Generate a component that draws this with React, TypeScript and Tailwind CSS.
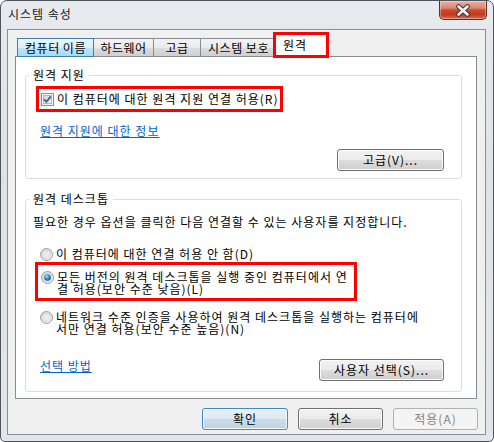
import type { ReactNode } from "react";

type Kind = "normal" | "default" | "disabled";

const buttonStyles: Record<Kind, string> = {
  normal:
    "border-[#707070] bg-[linear-gradient(#f2f2f2_0%,#ebebeb_50%,#dddddd_50%,#cfcfcf_100%)] shadow-[inset_0_0_0_1px_#fbfbfb] text-black",
  default:
    "border-[#3c8ac8] bg-[linear-gradient(#e9f1f6_0%,#dde9f1_50%,#cbdde9_50%,#bdd3e2_100%)] shadow-[inset_0_0_0_1px_#f6fbfe] text-black",
  disabled: "border-[#adb2b5] bg-[#f4f4f4] text-[#838383]",
};

function WinButton({ label, kind = "normal", className = "" }: { label: string; kind?: Kind; className?: string }) {
  return (
    <div
      className={`flex h-[22px] items-center justify-center rounded-[3px] border text-[12px] leading-none ${buttonStyles[kind]} ${className}`}
    >
      {label}
    </div>
  );
}

function CheckBox() {
  return (
    <svg width="13" height="13" viewBox="0 0 13 13" className="shrink-0">
      <defs>
        <linearGradient id="cbIn" x1="0" y1="0" x2="1" y2="1">
          <stop offset="0" stopColor="#cfd3d8" />
          <stop offset="1" stopColor="#f7f7f7" />
        </linearGradient>
      </defs>
      <rect x="0.5" y="0.5" width="12" height="12" fill="#f6f6f6" stroke="#8e8f8f" />
      <rect x="2.5" y="2.5" width="8" height="8" fill="url(#cbIn)" stroke="#b4b8bd" />
      <path d="M3.2 6.3 L5.4 8.9 L9.8 3.4" fill="none" stroke="#4a5f97" strokeWidth="1.8" />
    </svg>
  );
}

function Radio({ on = false }: { on?: boolean }) {
  return (
    <svg width="13" height="13" viewBox="0 0 13 13" className="shrink-0">
      <defs>
        <linearGradient id="rdOut" x1="0" y1="0" x2="1" y2="1">
          <stop offset="0" stopColor="#d3d5d8" />
          <stop offset="1" stopColor="#f8f8f8" />
        </linearGradient>
        <radialGradient id="rdDot" cx="0.4" cy="0.35" r="0.7">
          <stop offset="0" stopColor="#b8e4fa" />
          <stop offset="0.45" stopColor="#2b9ad6" />
          <stop offset="1" stopColor="#0d4f80" />
        </radialGradient>
      </defs>
      <circle cx="6.5" cy="6.5" r="6" fill="url(#rdOut)" stroke="#9a9c9f" />
      <circle cx="6.5" cy="6.5" r="4" fill="#ececec" stroke="#c4c6c9" strokeWidth="0.6" />
      {on && <circle cx="6.5" cy="6.5" r="3.3" fill="url(#rdDot)" />}
    </svg>
  );
}

function RadioOption({ on, lines }: { on?: boolean; lines: string[] }) {
  return (
    <div className="flex items-start gap-[3px]">
      <Radio on={on} />
      <div className="text-[12px] leading-[12px] whitespace-nowrap">
        {lines.map((l) => (
          <div key={l}>{l}</div>
        ))}
      </div>
    </div>
  );
}

function Group({ title, children, className = "" }: { title: string; children: ReactNode; className?: string }) {
  return (
    <fieldset className={`ml-[9px] w-[437px] rounded-[3px] border border-[#d5dfe5] ${className}`}>
      <legend className="ml-[3px] px-[4px] text-[12px] leading-[14px]">{title}</legend>
      {children}
    </fieldset>
  );
}

const tabs: { label: string; w: string; hot?: boolean }[] = [
  { label: "컴퓨터 이름", w: "w-[77px]", hot: true },
  { label: "하드웨어", w: "w-[61px]" },
  { label: "고급", w: "w-[48px]" },
  { label: "시스템 보호", w: "w-[77px]" },
];

export default function App() {
  return (
    <div className="flex h-[442px] w-[494px] flex-col rounded-t-[7px] rounded-b-[5px] border border-[#4f545a] bg-[linear-gradient(#e7eaee,#dde2e7_40%,#e2e6ea)] font-['Noto_Sans_CJK_KR','Liberation_Sans',sans-serif] tracking-[1px] text-black">
      {/* title bar */}
      <div className="flex h-[28px] items-start justify-between">
        <span className="ml-[7px] mt-[6px] text-[12px] leading-[14px] text-[#1a1a1a]">시스템 속성</span>
        <div className="mr-[6px] flex h-[19px] w-[48px] items-center justify-center rounded-b-[5px] border border-t-0 border-[#6a2a1f] bg-[linear-gradient(#eab2a4_0%,#d98670_40%,#c84a30_50%,#c23a1f_75%,#d96a4c_100%)] shadow-[inset_0_0_0_1px_rgba(255,255,255,0.35)]">
          <svg width="16" height="13" viewBox="0 0 16 13">
            <path d="M3.5 2.5 L12.5 10.5 M12.5 2.5 L3.5 10.5" stroke="#3a3a3a" strokeWidth="4.6" strokeLinecap="round" />
            <path d="M3.5 2.5 L12.5 10.5 M12.5 2.5 L3.5 10.5" stroke="#f4f4f4" strokeWidth="2.6" strokeLinecap="round" />
          </svg>
        </div>
      </div>

      {/* client area */}
      <div className="ml-[6px] mr-[7px] flex h-[406px] flex-col border border-[#8a9098] bg-[#f0f0f0]">
        {/* tabs */}
        <div className="relative z-10 ml-[9px] mt-[2px] mb-[-2px] flex h-[26px] items-end">
          {tabs.map((t, i) => (
            <div
              key={t.label}
              className={`mb-[1px] flex h-[19px] items-center justify-center border text-[12px] leading-none tracking-[0.5px] ${t.w} ${
                i > 0 ? "-ml-px" : ""
              } ${
                t.hot
                  ? "relative z-10 border-[#3c7fb1] bg-[linear-gradient(#eaf6fd_0%,#d9f0fc_50%,#bee6fd_50%,#a7d9f5_100%)]"
                  : "border-[#898c95] bg-[linear-gradient(#f3f3f3_0%,#ebebeb_50%,#dddddd_50%,#cfcfcf_100%)]"
              }`}
            >
              {t.label}
            </div>
          ))}
          <div className="relative z-20 -ml-[4px] flex h-[26px] w-[56px] items-start border-[3px] border-[#ff0000] bg-white pl-[7px] pt-[4px] text-[12px] leading-[12px]">
            원격
          </div>
        </div>

        {/* tab page */}
        <div className="ml-[7px] flex h-[343px] w-[462px] flex-col border border-[#898c95] bg-white">
          <Group title="원격 지원" className="mt-[11px] pb-[7px]">
            <div className="ml-[10px] mt-[4px] flex h-[26px] w-[247px] items-center gap-[3px] border-[3px] border-[#ff0000] pl-[2px] text-[12px] leading-none whitespace-nowrap">
              <CheckBox />
              <span>이 컴퓨터에 대한 원격 지원 연결 허용(R)</span>
            </div>
            <div className="ml-[14px] mt-[13px] text-[12px] leading-[12px] text-[#0066cc] underline">원격 지원에 대한 정보</div>
            <div className="mr-[17px] mt-[12px] flex justify-end">
              <WinButton label="고급(V)..." className="w-[107px]" />
            </div>
          </Group>

          <Group title="원격 데스크톱" className="mt-[13px] pb-[10px]">
            <div className="ml-[7px] mt-[10px] text-[12px] leading-[12px] whitespace-nowrap">
              필요한 경우 옵션을 클릭한 다음 연결할 수 있는 사용자를 지정합니다.
            </div>
            <div className="ml-[14px] mt-[20px]">
              <RadioOption lines={["이 컴퓨터에 대한 연결 허용 안 함(D)"]} />
            </div>
            <div className="ml-[9px] mt-[1px] w-[322px] border-[3px] border-[#ff0000] pb-[3px] pl-[3px] pt-[6px]">
              <RadioOption on lines={["모든 버전의 원격 데스크톱을 실행 중인 컴퓨터에서 연", "결 허용(보안 수준 낮음)(L)"]} />
            </div>
            <div className="ml-[14px] mt-[10px]">
              <RadioOption
                lines={["네트워크 수준 인증을 사용하여 원격 데스크톱을 실행하는 컴퓨터에", "서만 연결 허용(보안 수준 높음)(N)"]}
              />
            </div>
            <div className="mr-[17px] mt-[24px] flex items-start justify-between">
              <span className="ml-[14px] mt-[1px] text-[12px] leading-[12px] text-[#0066cc] underline">선택 방법</span>
              <WinButton label="사용자 선택(S)..." className="w-[125px]" />
            </div>
          </Group>
        </div>

        {/* dialog buttons */}
        <div className="mr-[7px] mt-[9px] flex justify-end gap-[10px]">
          <WinButton label="확인" kind="default" className="w-[86px]" />
          <WinButton label="취소" className="w-[85px]" />
          <WinButton label="적용(A)" kind="disabled" className="w-[85px]" />
        </div>
      </div>
    </div>
  );
}
